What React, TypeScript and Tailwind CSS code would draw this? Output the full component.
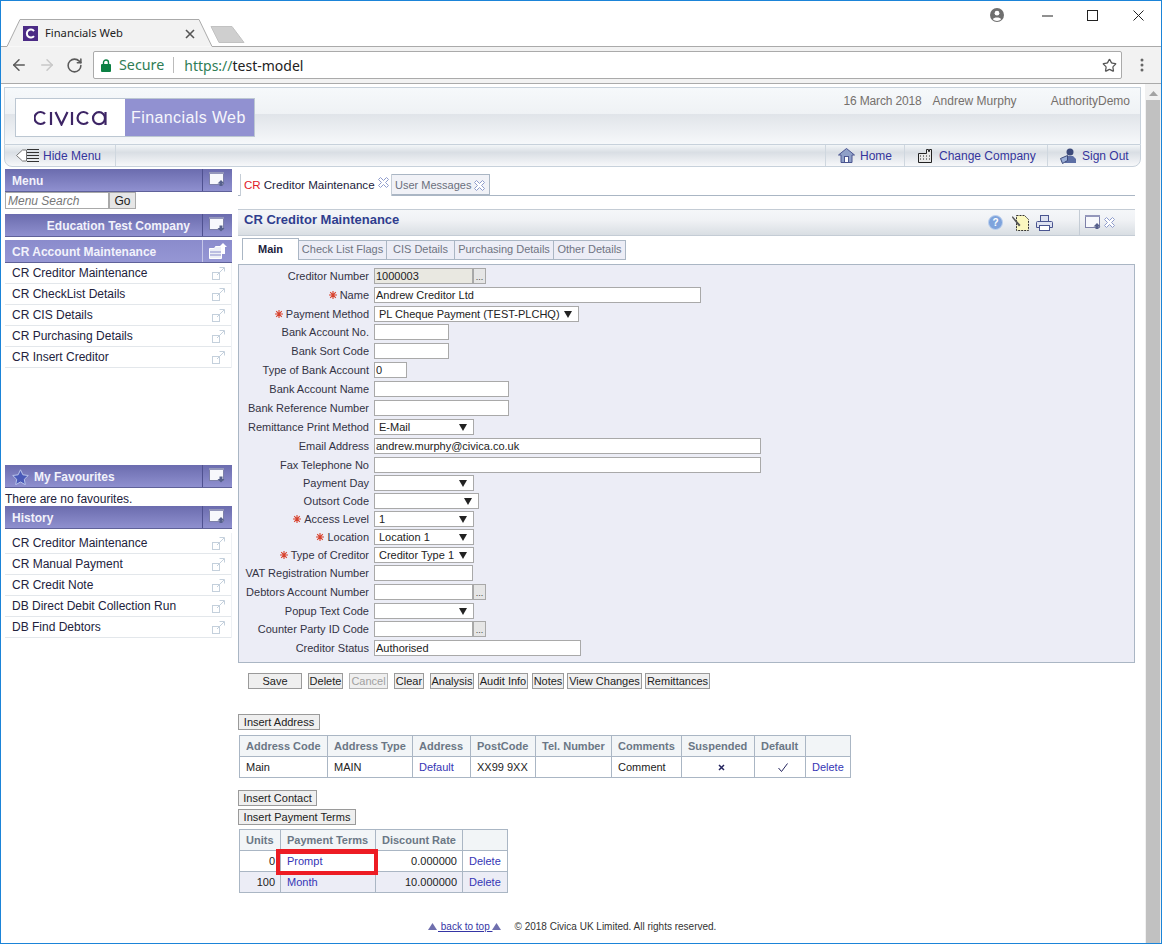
import React from "react";
import { ArrowLeft, ArrowRight, RotateCw, Star } from "lucide-react";

const barBg = "bg-[linear-gradient(#6b6cae,#8f90cf)]";

function WinIcon({ dir = "up" }: { dir?: "up" | "down" }) {
  return (
    <svg width="17" height="16" viewBox="0 0 17 16" className="block">
      <rect x="0.5" y="0.5" width="14" height="12" fill="#f7f8fc" stroke="#7d80a8" />
      <rect x="0" y="0" width="15" height="2" fill="#9497bb" />
      {dir === "up" ? (
        <path d="M12 8l3.5 3.5h-2v2.5h-3v-2.5h-2z" fill="#56608c" />
      ) : (
        <path d="M10.5 8.5h3v2.5h2L12 14.5 8.5 11h2z" fill="#56608c" />
      )}
    </svg>
  );
}

function FolderIcon() {
  return (
    <svg width="18" height="16" viewBox="0 0 18 16" className="block">
      <path d="M0.5 5.5h5l1-2h6v12h-12z" fill="#eef0f7" stroke="#fff" />
      <path d="M1 9h11M1 12h11" stroke="#8a8ccb" />
      <path d="M14 0l4 4h-2v7h-3V4h-3z" fill="#fff" />
    </svg>
  );
}

function ExtIcon() {
  return (
    <svg width="13" height="13" viewBox="0 0 13 13" className="block" fill="none" stroke="#c4d0dc">
      <rect x="0.5" y="5.5" width="7" height="7" />
      <path d="M5 8l7-7M7.5 0.5h5v4" />
    </svg>
  );
}

function CloseX() {
  return (
    <svg width="11" height="11" viewBox="0 0 11 11" className="block" fill="#fff" stroke="#8f9ccc">
      <path d="M2.5 0.5L5.5 3.5 8.5 0.5 10.5 2.5 7.5 5.5 10.5 8.5 8.5 10.5 5.5 7.5 2.5 10.5 0.5 8.5 3.5 5.5 0.5 2.5z" />
    </svg>
  );
}

function Req() {
  return (
    <svg width="8" height="8" viewBox="0 0 8 8" className="block mr-[3px] shrink-0" stroke="#d8412c" strokeWidth="1.1">
      <path d="M4 0v8M0 4h8M1.2 1.2l5.6 5.6M6.8 1.2L1.2 6.8" />
    </svg>
  );
}

function Bar({ label, center, dir, light, leading, h = "h-[23px]" }: { label: string; center?: boolean; dir?: "up" | "down"; light?: boolean; leading?: React.ReactNode; h?: string }) {
  return (
    <div className={`flex ${h} items-stretch border-b border-[#5f6199] ${light ? "bg-[linear-gradient(#8a8bcc,#9596d4)]" : barBg}`}>
      <div className={`flex w-[197px] items-center pt-[2px] font-bold text-[12px] text-[#f2f2fb] ${center ? "justify-end pr-[12px]" : "pl-[7px]"}`}>
        {leading}
        <span>{label}</span>
      </div>
      <div className={`flex flex-1 items-center justify-center border-l ${light ? "border-[#c5c6e8]" : "border-[#4f5190]"}`}>
        {light ? <FolderIcon /> : <WinIcon dir={dir} />}
      </div>
    </div>
  );
}

function MenuRows({ items }: { items: string[] }) {
  return (
    <div className="border-r border-[#eef1f4]">
      {items.map((t) => (
        <div key={t} className="flex h-[21px] items-center justify-between border-b border-[#e3e7eb] pl-[7px] pr-[6px] text-[12px] text-[#22223c]">
          <span>{t}</span>
          <ExtIcon />
        </div>
      ))}
    </div>
  );
}

function Dots() {
  return (
    <span className="flex h-[16px] w-[13px] items-end justify-center border border-[#a8a8a8] bg-[#e6e6e6] text-[9px] leading-[11px] text-[#444]">...</span>
  );
}

type Field = { label: string; req?: boolean; kind: "input" | "select"; w: string; value?: string; h: string; dots?: boolean; gray?: boolean };

const fields: Field[] = [
  { label: "Creditor Number", kind: "input", w: "w-[99px]", value: "1000003", h: "h-[19px]", dots: true, gray: true },
  { label: "Name", req: true, kind: "input", w: "w-[327px]", value: "Andrew Creditor Ltd", h: "h-[19px]" },
  { label: "Payment Method", req: true, kind: "select", w: "w-[205px]", value: "PL Cheque Payment (TEST-PLCHQ)", h: "h-[18px]" },
  { label: "Bank Account No.", kind: "input", w: "w-[75px]", h: "h-[19px]" },
  { label: "Bank Sort Code", kind: "input", w: "w-[75px]", h: "h-[19px]" },
  { label: "Type of Bank Account", kind: "input", w: "w-[33px]", value: "0", h: "h-[19px]" },
  { label: "Bank Account Name", kind: "input", w: "w-[135px]", h: "h-[19px]" },
  { label: "Bank Reference Number", kind: "input", w: "w-[135px]", h: "h-[19px]" },
  { label: "Remittance Print Method", kind: "select", w: "w-[100px]", value: "E-Mail", h: "h-[19px]" },
  { label: "Email Address", kind: "input", w: "w-[387px]", value: "andrew.murphy@civica.co.uk", h: "h-[19px]" },
  { label: "Fax Telephone No", kind: "input", w: "w-[387px]", h: "h-[18px]" },
  { label: "Payment Day", kind: "select", w: "w-[100px]", h: "h-[18px]" },
  { label: "Outsort Code", kind: "select", w: "w-[105px]", h: "h-[18px]" },
  { label: "Access Level", req: true, kind: "select", w: "w-[100px]", value: "1", h: "h-[18px]" },
  { label: "Location", req: true, kind: "select", w: "w-[100px]", value: "Location 1", h: "h-[18px]" },
  { label: "Type of Creditor", req: true, kind: "select", w: "w-[100px]", value: "Creditor Type 1", h: "h-[18px]" },
  { label: "VAT Registration Number", kind: "input", w: "w-[99px]", h: "h-[19px]" },
  { label: "Debtors Account Number", kind: "input", w: "w-[99px]", h: "h-[19px]", dots: true },
  { label: "Popup Text Code", kind: "select", w: "w-[100px]", h: "h-[18px]" },
  { label: "Counter Party ID Code", kind: "input", w: "w-[99px]", h: "h-[19px]", dots: true },
  { label: "Creditor Status", kind: "input", w: "w-[207px]", value: "Authorised", h: "h-[19px]" },
];

function FormRow({ f }: { f: Field }) {
  return (
    <div className={`flex ${f.h} items-start`}>
      <label className="flex h-[16px] w-[130px] items-center justify-end whitespace-nowrap text-[11px] text-[#333344]">
        {f.req && <Req />}
        {f.label}
      </label>
      <div className="ml-[5px] flex">
        {f.kind === "input" ? (
          <input
            readOnly
            value={f.value ?? ""}
            className={`${f.w} h-[16px] border border-[#a9a9a9] px-[1px] text-[11px] text-[#222] outline-none ${f.gray ? "bg-[#e9e8e1]" : "bg-white"}`}
          />
        ) : (
          <div className={`${f.w} flex h-[16px] items-center justify-between border border-[#a9a9a9] bg-white pl-[4px] pr-[6px] text-[11px] text-[#222]`}>
            <span className="whitespace-nowrap">{f.value ?? ""}</span>
            <svg width="8" height="7" viewBox="0 0 8 7" className="block shrink-0"><path d="M0 0h8L4 7z" fill="#222" /></svg>
          </div>
        )}
        {f.dots && <Dots />}
      </div>
    </div>
  );
}

function Btn({ children, w, ml, disabled, mt }: { children: React.ReactNode; w: string; ml?: string; disabled?: boolean; mt?: string }) {
  return (
    <button className={`flex h-[16px] ${w} ${ml ?? ""} ${mt ?? ""} items-center justify-center whitespace-nowrap border bg-[#efefef] text-[11px] leading-none ${disabled ? "text-[#a0a0a0] border-[#b5b5b5]" : "text-[#222] border-[#9a9a9a]"}`}>
      {children}
    </button>
  );
}

const th = "border border-[#aab6c4] bg-[#f2f5f7] pl-[6px] text-left text-[11px] font-bold text-[#6b7785] h-[21px] whitespace-nowrap";
const td = "border border-[#aab6c4] pl-[6px] text-[11px] text-[#222] h-[21px] whitespace-nowrap";
const link = "text-[#3535b5]";

function HomeIcon() {
  return (
    <svg width="17" height="15" viewBox="0 0 17 15" className="block">
      <path d="M8.5 0.5L16.5 7h-2.5v7.5h-11V7H0.5z" fill="#8fa0c8" stroke="#4a5590" />
      <rect x="6.5" y="8.5" width="4" height="6" fill="#fff" stroke="#4a5590" />
    </svg>
  );
}
function BuildingIcon() {
  return (
    <svg width="15" height="15" viewBox="0 0 15 15" className="block">
      <path d="M0.5 14.5V5.5h8V1.5h2v2h1v-2h2v13z" fill="#e8e8e8" stroke="#222" />
      <path d="M2 8h1M5 8h1M8 8h1M11 8h1M2 11h1M5 11h1M8 11h1M11 11h1" stroke="#222" />
    </svg>
  );
}
function SignOutIcon() {
  return (
    <svg width="17" height="16" viewBox="0 0 17 16" className="block">
      <circle cx="10" cy="4" r="3.5" fill="#3c4a7a" />
      <path d="M5 15v-4l3-3h5l3 3v4z" fill="#5d6fa5" />
      <path d="M0.5 10.5l7-3v5l-5 3z" fill="#9cb0d8" stroke="#3c4a7a" />
    </svg>
  );
}

export default function App() {
  return (
    <div className="relative flex h-[944px] w-[1162px] flex-col overflow-hidden border border-[#1b84d8] bg-white font-['Liberation_Sans',Arial,sans-serif]">
      {/* tab strip */}
      <div className="relative h-[46px] shrink-0 bg-white">
        <svg width="1160" height="46" viewBox="0 0 1160 46" className="absolute left-0 top-0">
          <path d="M-1 45.5H6L19 18.5H198L211 45.5H1160" fill="#f2f2f2" stroke="#aaaaaa" />
          <path d="M210 25.5H231L243 41.5H218z" fill="#cfcfcf" stroke="#c2c2c2" strokeLinejoin="round" />
        </svg>
        <div className="absolute left-[22px] top-[24px] flex items-center">
          <svg width="15" height="15" viewBox="0 0 15 15" className="block">
            <rect width="15" height="15" fill="#4b2a85" />
            <path d="M11 5a4 4 0 1 0 0 5" fill="none" stroke="#fff" strokeWidth="2" />
          </svg>
          <span className="ml-[7px] font-['Noto_Sans',sans-serif] text-[11.2px] text-[#222]">Financials Web</span>
        </div>
        <svg width="10" height="10" viewBox="0 0 10 10" className="absolute left-[184px] top-[28px]" stroke="#555" strokeWidth="1.6"><path d="M1 1l8 8M9 1l-8 8" /></svg>
        {/* window controls */}
        <svg width="14" height="14" viewBox="0 0 14 14" className="absolute left-[989px] top-[7px]">
          <circle cx="7" cy="7" r="7" fill="#6f6f6f" />
          <circle cx="7" cy="5.2" r="2.4" fill="#fff" />
          <path d="M2.8 11.2c1-2.4 7.4-2.4 8.4 0A6 6 0 0 1 2.8 11.2z" fill="#fff" />
        </svg>
        <svg width="11" height="2" viewBox="0 0 11 2" className="absolute left-[1041px] top-[14px]"><path d="M0 1h11" stroke="#222" /></svg>
        <svg width="11" height="11" viewBox="0 0 11 11" className="absolute left-[1086px] top-[9px]" fill="none" stroke="#222"><rect x="0.5" y="0.5" width="10" height="10" /></svg>
        <svg width="11" height="11" viewBox="0 0 11 11" className="absolute left-[1132px] top-[9px]" fill="none" stroke="#222"><path d="M0.5 0.5l10 10M10.5 0.5l-10 10" /></svg>
      </div>

      {/* toolbar */}
      <div className="flex h-[37px] shrink-0 items-center border-b border-[#aaaaaa] bg-[#f2f2f2]">
        <ArrowLeft className="ml-[9px] h-[18px] w-[18px] text-[#5a5a5a]" strokeWidth={2} />
        <ArrowRight className="ml-[10px] h-[18px] w-[18px] text-[#c8c8c8]" strokeWidth={2} />
        <RotateCw className="ml-[10px] h-[17px] w-[17px] text-[#5a5a5a]" strokeWidth={2.2} />
        <div className="ml-[10px] flex h-[28px] w-[1029px] items-center rounded-[2px] border border-[#aaaaaa] bg-white font-['Noto_Sans',sans-serif] text-[14px]">
          <svg width="10" height="13" viewBox="0 0 10 13" className="ml-[7px] block">
            <path d="M2.5 6V3.5a2.5 2.5 0 0 1 5 0V6" fill="none" stroke="#0b8043" strokeWidth="1.4" />
            <rect y="5" width="10" height="8" rx="1" fill="#0b8043" />
          </svg>
          <span className="ml-[8px] text-[14.3px] text-[#2f7d55]">Secure</span>
          <span className="ml-[9px] h-[16px] w-px bg-[#bbbbbb]" />
          <span className="ml-[10px] text-[#2f7d55]">https://</span>
          <span className="text-[#222]">test-model</span>
          <Star className="ml-auto mr-[4px] h-[15px] w-[15px] text-[#555]" strokeWidth={2} />
        </div>
        <svg width="4" height="14" viewBox="0 0 4 14" className="ml-[18px] block" fill="#666"><circle cx="2" cy="2" r="1.5" /><circle cx="2" cy="7" r="1.5" /><circle cx="2" cy="12" r="1.5" /></svg>
      </div>

      {/* page */}
      <div className="flex min-h-0 flex-1">
        <div className="w-[1144px] shrink-0">
          <div className="ml-[3px] mt-[3px] w-[1137px]">
            {/* header */}
            <div className="flex h-[57px] items-start justify-between border border-[#c7d1db] border-b-0 bg-[linear-gradient(#f6f9fb_0%,#eff2f5_46%,#e0e4e9_46%,#f6f8fa_100%)] pl-[10px] pr-[10px]">
              <div className="mt-[10px] flex h-[39px]">
                <div className="flex w-[110px] items-center justify-center border border-r-0 border-[#bcc7d2] bg-white">
                  <svg width="74" height="16" viewBox="0 0 74 16" role="img" aria-label="civica" className="block" fill="none" stroke="#3d2565" strokeWidth="2.2">
                    <path d="M11 4a6 6 0 1 0 0 8" />
                    <path d="M17 2v13" />
                    <path d="M21.5 2l6 12.5 6-12.5" />
                    <path d="M38 2v13" />
                    <path d="M54 4a6 6 0 1 0 0 8" />
                    <circle cx="65" cy="8.2" r="6" />
                    <path d="M71.5 2v13" />
                  </svg>
                </div>
                <div className="flex w-[130px] items-center border border-l-0 border-[#bcc7d2] bg-[#9191d1] pl-[6px] text-[16px] tracking-[0.4px] text-[#f6f6fc]">Financials Web</div>
              </div>
              <div className="mt-[4px] flex text-[12px] text-[#75706c]">
                <span className="tracking-[-0.15px]">16 March 2018</span>
                <span className="ml-[11px]">Andrew Murphy</span>
                <span className="ml-[34px]">AuthorityDemo</span>
              </div>
            </div>
            {/* nav */}
            <div className="flex h-[23px] items-stretch justify-between rounded-b-[8px] border border-[#c7d1db] bg-[linear-gradient(#f3f6f8_0%,#d9dee4_35%,#f7f8fa_100%)] text-[12px] text-[#35359c]">
              <div className="flex w-[111px] items-center rounded-bl-[8px] border-r border-[#cfd7df] pl-[11px]">
                <svg width="23" height="13" viewBox="0 0 23 13" className="block">
                  <path d="M0.5 6.5L6.5 1H10.5V12H6.5z" fill="#fff" stroke="#777" />
                  <path d="M11 0.5h12M11 3.5h12M11 6.5h12M11 9.5h12M11 12.5h12" stroke="#333" />
                </svg>
                <span className="ml-[4px]">Hide Menu</span>
              </div>
              <div className="flex">
                <div className="flex w-[79px] items-center border-l border-[#cfd7df] pl-[12px]">
                  <HomeIcon /><span className="ml-[5px]">Home</span>
                </div>
                <div className="flex w-[143px] items-center border-l border-[#cfd7df] pl-[13px]">
                  <BuildingIcon /><span className="ml-[6px] whitespace-nowrap">Change Company</span>
                </div>
                <div className="flex w-[93px] items-center border-l border-[#cfd7df] pl-[12px]">
                  <SignOutIcon /><span className="ml-[5px] whitespace-nowrap">Sign Out</span>
                </div>
              </div>
            </div>
          </div>

          {/* body */}
          <div className="ml-[4px] flex">
            {/* sidebar */}
            <aside className="mt-[2px] w-[227px] shrink-0">
              <Bar label="Menu" dir="up" />
              <div className="flex h-[17px]">
                <input readOnly placeholder="Menu Search" className="h-[17px] w-[104px] border border-[#a9a9a9] bg-white px-[2px] text-[12px] italic outline-none placeholder:text-[#777]" />
                <button className="h-[17px] w-[27px] border border-[#a9a9a9] bg-[#e6e6e6] text-[12px] leading-none text-[#222]">Go</button>
              </div>
              <div className="mt-[5px]"><Bar label="Education Test Company" center dir="down" /></div>
              <div className="mt-[3px]"><Bar label="CR Account Maintenance" light /></div>
              <MenuRows items={["CR Creditor Maintenance", "CR CheckList Details", "CR CIS Details", "CR Purchasing Details", "CR Insert Creditor"]} />
              <div className="mt-[97px]">
                <Bar
                  label="My Favourites"
                  dir="down"
                  leading={
                    <svg width="17" height="16" viewBox="0 0 17 16" className="mr-[5px] block">
                      <path d="M8.5 0.8l2.4 5 5.4.7-4 3.8 1 5.4-4.8-2.7-4.8 2.7 1-5.4-4-3.8 5.4-.7z" fill="#4a5ab8" stroke="#b9c4ea" />
                    </svg>
                  }
                />
              </div>
              <div className="flex h-[18px] items-center pt-[3px] text-[12px] text-[#22223c]">There are no favourites.</div>
              <Bar label="History" dir="up" />
              <div className="mt-[4px]">
                <MenuRows items={["CR Creditor Maintenance", "CR Manual Payment", "CR Credit Note", "DB Direct Debit Collection Run", "DB Find Debtors"]} />
              </div>
            </aside>

            {/* main */}
            <main className="ml-[6px] w-[897px] pt-[7px]">
              <div className="flex h-[22px] items-start border-b border-[#aab6c4] pl-[2px] text-[11.6px]">
                <div className="flex h-[22px] w-[152px] items-start border-x border-[#c5cdd6] bg-white pl-[3px] pt-[2px]">
                  <span className="text-[#e0202a]">CR</span>
                  <span className="ml-[3px] whitespace-nowrap text-[#22223c]">Creditor Maintenance</span>
                  <span className="ml-[3px] mt-[1px]"><CloseX /></span>
                </div>
                <div className="flex h-[21px] w-[98px] items-center border border-l-0 border-[#aab6c4] bg-[#f1f2f7] pl-[3px] pt-[2px] text-[11px] text-[#6a6f7c]">
                  <span className="whitespace-nowrap">User Messages</span>
                  <span className="ml-[3px]"><CloseX /></span>
                </div>
              </div>

              <div className="mt-[13px] flex h-[27px] items-center justify-between border-y border-[#c4ccd5] bg-[linear-gradient(#f5f7f9,#f0f2f5_40%,#d9dee3_100%)] pl-[6px]">
                <span className="mb-[6px] text-[13px] font-bold text-[#2f3d8e]">CR Creditor Maintenance</span>
                <div className="flex h-full items-center">
                  <svg width="15" height="15" viewBox="0 0 15 15" className="block">
                    <circle cx="7.5" cy="7.5" r="7" fill="#7ea3dc" stroke="#bcd0ee" />
                    <text x="7.5" y="11" textAnchor="middle" fontSize="10" fontWeight="700" fill="#fff" fontFamily="Liberation Sans">?</text>
                  </svg>
                  <svg width="17" height="17" viewBox="0 0 17 17" className="ml-[9px] block">
                    <path d="M4.5 1.5h8l4 4v11h-12z" fill="#fbf8c0" stroke="#333" strokeDasharray="2 1" />
                    <path d="M0.5 2l8 9-1.5 1.5-7-9z" fill="#555" />
                  </svg>
                  <svg width="17" height="16" viewBox="0 0 17 16" className="ml-[7px] block" fill="#dfe3f1" stroke="#4a5590">
                    <rect x="4.5" y="0.5" width="8" height="6" />
                    <path d="M1.5 6.5h14a1 1 0 0 1 1 1v5h-16v-5a1 1 0 0 1 1-1z" />
                    <rect x="3.5" y="10.5" width="10" height="5" fill="#fff" />
                  </svg>
                  <div className="ml-[26px] flex h-full items-center border-l border-[#c4ccd5] pl-[5px] pr-[20px]">
                    <WinIcon dir="up" />
                    <span className="ml-[2px]"><CloseX /></span>
                  </div>
                </div>
              </div>

              <div className="mt-[2px] flex h-[22px] items-end pl-[4px] text-[11px]">
                <div className="flex h-[22px] w-[57px] items-center justify-center border border-b-0 border-[#aab6c4] bg-white pb-[1px] font-bold text-[#22223c]">Main</div>
                {[
                  ["Check List Flags", "w-[88px]"],
                  ["CIS Details", "w-[68px]"],
                  ["Purchasing Details", "w-[99px]"],
                  ["Other Details", "w-[72px]"],
                ].map(([t, w]) => (
                  <div key={t} className={`flex h-[20px] ${w} items-center justify-center whitespace-nowrap border border-l-0 border-[#aab6c4] bg-[#ecedf6] pb-[1px] text-[#6f7482]`}>{t}</div>
                ))}
              </div>

              <div className="mt-[4px] h-[399px] border border-[#aab6c4] bg-[#ecedf6] pt-[3px]">
                {fields.map((f) => (
                  <FormRow key={f.label} f={f} />
                ))}
              </div>

              <div className="mt-[10px] flex">
                <Btn w="w-[54px]" ml="ml-[10px]">Save</Btn>
                <Btn w="w-[35px]" ml="ml-[6px]">Delete</Btn>
                <Btn w="w-[39px]" ml="ml-[6px]" disabled>Cancel</Btn>
                <Btn w="w-[30px]" ml="ml-[6px]">Clear</Btn>
                <Btn w="w-[44px]" ml="ml-[6px]">Analysis</Btn>
                <Btn w="w-[50px]" ml="ml-[4px]">Audit Info</Btn>
                <Btn w="w-[32px]" ml="ml-[4px]">Notes</Btn>
                <Btn w="w-[75px]" ml="ml-[3px]">View Changes</Btn>
                <Btn w="w-[65px]" ml="ml-[3px]">Remittances</Btn>
              </div>

              <Btn w="w-[82px]" mt="mt-[25px]">Insert Address</Btn>
              <table className="ml-[1px] mt-[5px] w-[611px] table-fixed border-collapse">
                <colgroup>
                  {["w-[88px]", "w-[85px]", "w-[58px]", "w-[65px]", "w-[76px]", "w-[70px]", "w-[73px]", "w-[51px]", "w-[45px]"].map((c, i) => (
                    <col key={i} className={c} />
                  ))}
                </colgroup>
                <thead>
                  <tr>
                    {["Address Code", "Address Type", "Address", "PostCode", "Tel. Number", "Comments", "Suspended", "Default", ""].map((h, i) => (
                      <th key={i} className={th}>{h}</th>
                    ))}
                  </tr>
                </thead>
                <tbody>
                  <tr>
                    <td className={td}>Main</td>
                    <td className={td}>MAIN</td>
                    <td className={`${td} ${link}`}>Default</td>
                    <td className={td}>XX99 9XX</td>
                    <td className={td}></td>
                    <td className={td}>Comment</td>
                    <td className={`${td} pl-0`}>
                      <svg width="7" height="7" viewBox="0 0 7 7" className="mx-auto block" stroke="#24245e" strokeWidth="1.5"><path d="M1 1l5 5M6 1l-5 5" /></svg>
                    </td>
                    <td className={`${td} pl-0`}>
                      <svg width="10" height="9" viewBox="0 0 10 9" className="mx-auto block" fill="none" stroke="#24245e"><path d="M0.5 5l3 3.5L9.5 0.5" /></svg>
                    </td>
                    <td className={`${td} ${link}`}>Delete</td>
                  </tr>
                </tbody>
              </table>

              <Btn w="w-[79px]" mt="mt-[12px]">Insert Contact</Btn>
              <Btn w="w-[118px]" mt="mt-[3px]">Insert Payment Terms</Btn>
              <div className="relative ml-[1px] mt-[4px] w-[268px]">
                <table className="w-[268px] table-fixed border-collapse">
                  <colgroup>
                    <col className="w-[41px]" />
                    <col className="w-[95px]" />
                    <col className="w-[87px]" />
                    <col className="w-[45px]" />
                  </colgroup>
                  <thead>
                    <tr>
                      {["Units", "Payment Terms", "Discount Rate", ""].map((h, i) => (
                        <th key={i} className={th}>{h}</th>
                      ))}
                    </tr>
                  </thead>
                  <tbody>
                    <tr>
                      <td className={`${td} pr-[5px] text-right`}>0</td>
                      <td className={`${td} ${link}`}>Prompt</td>
                      <td className={`${td} pr-[5px] text-right`}>0.000000</td>
                      <td className={`${td} ${link}`}>Delete</td>
                    </tr>
                    <tr className="bg-[#ecedf6]">
                      <td className={`${td} pr-[5px] text-right`}>100</td>
                      <td className={`${td} ${link}`}>Month</td>
                      <td className={`${td} pr-[5px] text-right`}>10.000000</td>
                      <td className={`${td} ${link}`}>Delete</td>
                    </tr>
                  </tbody>
                </table>
                <div className="absolute left-[37px] top-[20px] h-[26px] w-[102px] border-[4px] border-t-[5px] border-[#ed1c24]" />
              </div>

              <div className="ml-[190px] mt-[26px] flex items-center text-[10px] text-[#333]">
                <svg width="9" height="7" viewBox="0 0 9 7" className="block"><path d="M4.5 0L9 7H0z" fill="#6f6fae" /></svg>
                <span className="ml-[1px] text-[#3535a5] underline">&nbsp;back to top&nbsp;</span>
                <svg width="9" height="7" viewBox="0 0 9 7" className="block"><path d="M4.5 0L9 7H0z" fill="#6f6fae" /></svg>
                <span className="ml-[13px] whitespace-nowrap">© 2018 Civica UK Limited. All rights reserved.</span>
              </div>
            </main>
          </div>
        </div>

        {/* scrollbar */}
        <div className="flex w-[16px] flex-col items-center bg-[#f1f1f1] pt-[7px]">
          <svg width="9" height="5" viewBox="0 0 9 5" className="block shrink-0"><path d="M4.5 0L9 5H0z" fill="#a3a3a3" /></svg>
          <div className="mt-[4px] w-[14px] flex-1 bg-[#c1c1c1]" />
        </div>
      </div>
    </div>
  );
}
